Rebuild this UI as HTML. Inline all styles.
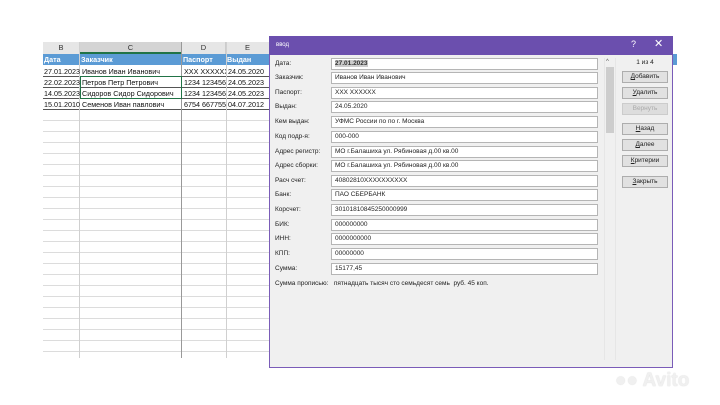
<!DOCTYPE html>
<html><head><meta charset="utf-8"><style>
*{margin:0;padding:0;box-sizing:border-box}
body{width:720px;height:405px;background:#fff;position:relative;overflow:hidden;font-family:"Liberation Sans","Noto Sans CJK SC",sans-serif;font-size:7px;color:#222}
.a{position:absolute}
.hl{position:absolute;left:43px;width:227px;height:1px;background:#dcdcdc}
.vl{position:absolute;top:42px;width:1px;height:316px;background:#d0d0d0}
.ch{position:absolute;top:42px;height:12px;background:#e6e6e6;text-align:center;font-size:7.5px;line-height:12px;color:#333;border-right:1px solid #ccc}
.cell{position:absolute;height:11px;line-height:11px;font-size:7.2px;white-space:nowrap;overflow:hidden;padding-left:1px;color:#111}
.lb{position:absolute;left:275px;font-size:6.5px;color:#222}
.in{position:absolute;left:331px;width:267px;height:12px;background:#fff;border:1px solid #b5b5b5;font-size:6.5px;line-height:10px;padding-left:3px}
.bt{position:absolute;left:622px;width:46px;height:12px;background:#e1e1e1;border:1px solid #adadad;font-size:6.5px;text-align:center;line-height:10px;color:#222}
</style></head><body>
<div class="ch" style="left:43px;width:37px">B</div>
<div class="ch" style="left:80px;width:102px;border-bottom:2px solid #217346;background:#d4d4d4">C</div>
<div class="ch" style="left:182px;width:44px">D</div>
<div class="ch" style="left:226px;width:44px">E</div>
<div class="a" style="left:43px;top:54px;width:227px;height:11px;background:#5b9bd5"></div>
<div class="cell" style="left:43px;top:54px;color:#fff;font-weight:bold">Дата</div>
<div class="cell" style="left:80px;top:54px;color:#fff;font-weight:bold">Заказчик</div>
<div class="cell" style="left:182px;top:54px;color:#fff;font-weight:bold">Паспорт</div>
<div class="cell" style="left:226px;top:54px;color:#fff;font-weight:bold">Выдан</div>
<div class="a" style="left:672px;top:54px;width:5px;height:11px;background:#5b9bd5"></div>
<div class="hl" style="top:76px;background:#555"></div><div class="hl" style="top:87px;background:#555"></div><div class="hl" style="top:98px;background:#555"></div><div class="hl" style="top:109px;background:#555"></div>
<div class="hl" style="top:120px"></div><div class="hl" style="top:131px"></div><div class="hl" style="top:142px"></div><div class="hl" style="top:153px"></div><div class="hl" style="top:164px"></div><div class="hl" style="top:175px"></div><div class="hl" style="top:186px"></div><div class="hl" style="top:197px"></div><div class="hl" style="top:208px"></div><div class="hl" style="top:219px"></div><div class="hl" style="top:230px"></div><div class="hl" style="top:241px"></div><div class="hl" style="top:252px"></div><div class="hl" style="top:263px"></div><div class="hl" style="top:274px"></div><div class="hl" style="top:285px"></div><div class="hl" style="top:296px"></div><div class="hl" style="top:307px"></div><div class="hl" style="top:318px"></div><div class="hl" style="top:329px"></div><div class="hl" style="top:340px"></div><div class="hl" style="top:351px"></div>
<div class="vl" style="left:79px"></div><div class="vl" style="left:181px;background:#999"></div><div class="vl" style="left:226px"></div>
<div class="cell" style="left:43px;top:66px">27.01.2023</div><div class="cell" style="left:81px;top:66px">Иванов Иван Иванович</div><div class="cell" style="left:183px;top:66px;width:43px">XXX XXXXXX</div><div class="cell" style="left:227px;top:66px;width:43px">24.05.2020</div>
<div class="cell" style="left:43px;top:77px">22.02.2023</div><div class="cell" style="left:81px;top:77px">Петров Петр Петрович</div><div class="cell" style="left:183px;top:77px;width:43px">1234 123456</div><div class="cell" style="left:227px;top:77px;width:43px">24.05.2023</div>
<div class="cell" style="left:43px;top:88px">14.05.2023</div><div class="cell" style="left:81px;top:88px">Сидоров Сидор Сидорович</div><div class="cell" style="left:183px;top:88px;width:43px">1234 123456</div><div class="cell" style="left:227px;top:88px;width:43px">24.05.2023</div>
<div class="cell" style="left:43px;top:99px">15.01.2010</div><div class="cell" style="left:81px;top:99px">Семенов Иван павлович</div><div class="cell" style="left:183px;top:99px;width:43px">6754 667755</div><div class="cell" style="left:227px;top:99px;width:43px">04.07.2012</div>
<div class="a" style="left:80px;top:76px;width:102px;height:23px;border:1px solid #217346"></div>
<div class="a" style="left:269px;top:36px;width:404px;height:332px;background:#f0f0f0;border:1px solid #7a5cb8;border-top:none"></div>
<div class="a" style="left:269px;top:36px;width:404px;height:19px;background:#6b4fae"></div>
<div class="a" style="left:276px;top:42px;color:#fff;font-size:6px">ввод</div>
<div class="a" style="left:631px;top:39px;color:#fff;font-size:9px">?</div>
<div class="a" style="left:654px;top:37px;color:#fff;font-size:11px">✕</div>
<div class="lb" style="top:60px">Дата:</div><div class="in" style="top:58px;font-weight:bold;color:#333"><span style="background:#ccc">27.01.2023</span></div>
<div class="lb" style="top:74px">Заказчик:</div><div class="in" style="top:72px">Иванов Иван Иванович</div>
<div class="lb" style="top:89px">Паспорт:</div><div class="in" style="top:87px">XXX XXXXXX</div>
<div class="lb" style="top:103px">Выдан:</div><div class="in" style="top:101px">24.05.2020</div>
<div class="lb" style="top:118px">Кем выдан:</div><div class="in" style="top:116px">УФМС России по по г. Москва</div>
<div class="lb" style="top:133px">Код подр-я:</div><div class="in" style="top:131px">000-000</div>
<div class="lb" style="top:148px">Адрес регистр:</div><div class="in" style="top:146px">МО г.Балашиха ул. Рябиновая д.00 кв.00</div>
<div class="lb" style="top:162px">Адрес сборки:</div><div class="in" style="top:160px">МО г.Балашиха ул. Рябиновая д.00 кв.00</div>
<div class="lb" style="top:177px">Расч счет:</div><div class="in" style="top:175px">40802810XXXXXXXXXX</div>
<div class="lb" style="top:191px">Банк:</div><div class="in" style="top:189px">ПАО СБЕРБАНК</div>
<div class="lb" style="top:206px">Корсчет:</div><div class="in" style="top:204px">30101810845250000999</div>
<div class="lb" style="top:221px">БИК:</div><div class="in" style="top:219px">000000000</div>
<div class="lb" style="top:235px">ИНН:</div><div class="in" style="top:233px">0000000000</div>
<div class="lb" style="top:250px">КПП:</div><div class="in" style="top:248px">00000000</div>
<div class="lb" style="top:265px">Сумма:</div><div class="in" style="top:263px">15177,45</div>
<div class="lb" style="top:280px">Сумма прописью: &nbsp; пятнадцать тысяч сто семьдесят семь &nbsp;руб. 45 коп.</div>
<div class="a" style="left:604px;top:58px;width:12px;height:302px;background:#f0f0f0;border-left:1px solid #e6e6e6;border-right:1px solid #e6e6e6"></div>
<div class="a" style="left:606px;top:59px;font-size:6px;color:#555">^</div>
<div class="a" style="left:606px;top:67px;width:8px;height:66px;background:#cdcdcd"></div>
<div class="a" style="left:622px;top:59px;width:46px;text-align:center;font-size:6.5px">1 из 4</div>
<div class="bt" style="top:71px"><u>Д</u>обавить</div>
<div class="bt" style="top:87px"><u>У</u>далить</div>
<div class="bt" style="top:103px;color:#aaa;background:#ddd;border-color:#ccc">Вернуть</div>
<div class="bt" style="top:123px"><u>Н</u>азад</div>
<div class="bt" style="top:139px"><u>Д</u>алее</div>
<div class="bt" style="top:155px"><u>К</u>ритерии</div>
<div class="bt" style="top:176px"><u>З</u>акрыть</div>
<div class="a" style="left:615px;top:370px;font-size:19px;font-weight:bold;color:#f0f0f0;text-shadow:0 0 1px #ccc">●● Avito</div>
</body></html>
